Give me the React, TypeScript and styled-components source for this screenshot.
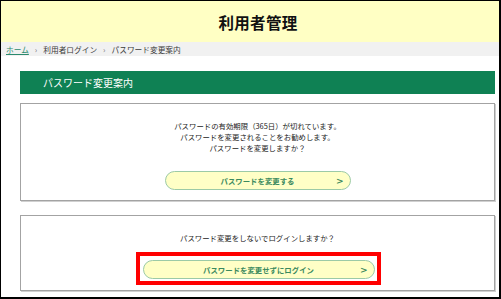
import styled, { createGlobalStyle } from "styled-components";

const GlobalStyle = createGlobalStyle`
  html, body {
    margin: 0;
    padding: 0;
    background: #ffffff;
  }
  body {
    font-family: "Noto Sans CJK JP", "Noto Sans", sans-serif;
    color: #333333;
  }
`;

const Frame = styled.div`
  width: 501px;
  height: 299px;
  box-sizing: border-box;
  border-style: solid;
  border-color: #000000;
  border-width: 1px 2px 2px 1px;
  overflow: hidden;
`;

const Page = styled.div`
  width: 514px;
`;

const Header = styled.header`
  height: 41px;
  background: #ffffc4;
  display: flex;
  align-items: center;
  justify-content: center;
  h1 {
    margin: 0;
    font-size: 15.5px;
    font-weight: 700;
    color: #111111;
    letter-spacing: 0.3px;
  }
`;

const Breadcrumb = styled.nav`
  height: 14px;
  background: #f1f1f1;
  display: flex;
  align-items: center;
  gap: 6px;
  padding-left: 5px;
  font-size: 7.7px;
  color: #3a3a3a;
  a {
    color: #2a8a6e;
    text-decoration: underline;
  }
`;

const Sep = styled.span`
  color: #777777;
  font-size: 8px;
`;

const Main = styled.main`
  width: 475px;
  margin-left: 19px;
  padding-top: 15px;
  display: flex;
  flex-direction: column;
`;

const TitleBar = styled.h2`
  margin: 0;
  height: 23px;
  background: #0f8154;
  color: #ffffff;
  font-size: 10px;
  font-weight: 400;
  display: flex;
  align-items: center;
  padding-left: 23px;
`;

const Card = styled.section<{ $top: number; $pad: string }>`
  margin-top: ${(p) => p.$top}px;
  border: 1px solid #a3a3a3;
  box-shadow: 1px 1px 0 #d0d0d0;
  padding: ${(p) => p.$pad};
  display: flex;
  flex-direction: column;
  align-items: center;
`;

const Message = styled.p`
  margin: 0;
  font-size: 7.4px;
  line-height: 11px;
  text-align: center;
  color: #222222;
`;

const Highlight = styled.div`
  margin-top: 9px;
  border: 4px solid #ff0000;
  padding: 4px 2px 2px 3px;
  margin-left: 1px;
`;

const PillButton = styled.button<{ $width: number; $top: number }>`
  width: ${(p) => p.$width}px;
  height: 19px;
  margin-top: ${(p) => p.$top}px;
  box-sizing: border-box;
  border: 1px solid #9ccaa6;
  border-radius: 10px;
  background: #ffffc6;
  color: #3b8a5e;
  font-family: inherit;
  font-size: 7.4px;
  font-weight: 700;
  padding: 0 6px;
  display: grid;
  grid-template-columns: 1fr auto 1fr;
  align-items: center;
  cursor: pointer;
  span:last-child {
    justify-self: end;
    font-size: 9px;
    font-family: "DejaVu Sans", sans-serif;
  }
`;

export default function App() {
  return (
    <>
      <GlobalStyle />
      <Frame>
        <Page>
          <Header>
            <h1>利用者管理</h1>
          </Header>
          <Breadcrumb>
            <a href="#">ホーム</a>
            <Sep>›</Sep>
            <span>利用者ログイン</span>
            <Sep>›</Sep>
            <span>パスワード変更案内</span>
          </Breadcrumb>
          <Main>
            <TitleBar>パスワード変更案内</TitleBar>
            <Card $top={9} $pad="16px 0 10px 0">
              <Message>
                パスワードの有効期限（365日）が切れています。
                <br />
                パスワードを変更されることをお勧めします。
                <br />
                パスワードを変更しますか？
              </Message>
              <PillButton $width={186} $top={18}>
                <span />
                <span>パスワードを変更する</span>
                <span>&gt;</span>
              </PillButton>
            </Card>
            <Card $top={14} $pad="16px 0 5px 0">
              <Message>パスワード変更をしないでログインしますか？</Message>
              <Highlight>
                <PillButton $width={232} $top={0}>
                  <span />
                  <span>パスワードを変更せずにログイン</span>
                  <span>&gt;</span>
                </PillButton>
              </Highlight>
            </Card>
          </Main>
        </Page>
      </Frame>
    </>
  );
}
